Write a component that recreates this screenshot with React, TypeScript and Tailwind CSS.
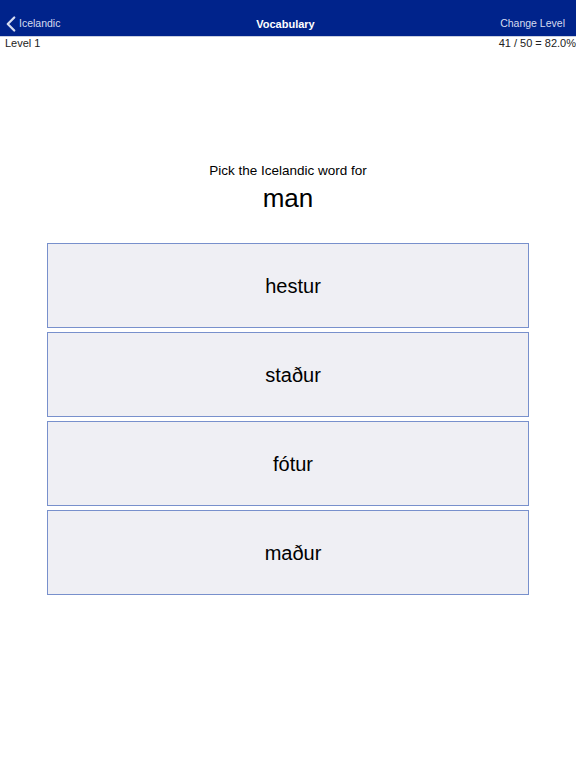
import { ChevronLeft } from 'lucide-react';

const choices = ['hestur', 'staður', 'fótur', 'maður'];

export default function App() {
  return (
    <div className="w-[576px] h-[768px] bg-white font-['Liberation_Sans',Arial,sans-serif] text-black">
      {/* Nav bar */}
      <div className="h-[37px] bg-[#00238b] border-b border-[#c9cfe0] flex items-end pb-[4px] px-[6px] text-white">
        <div className="flex-1 flex items-center text-[10.5px] text-[#d6dcf0]">
          <ChevronLeft className="w-[26px] h-[26px] -my-[8px] -ml-[8px]" strokeWidth={2.1} />
          <span className="-ml-[5px]">Icelandic</span>
        </div>
        <div className="flex-1 text-center text-[11px] font-bold">Vocabulary</div>
        <div className="flex-1 text-right text-[10.5px] text-[#d6dcf0] pr-[5px]">Change Level</div>
      </div>

      {/* Status row */}
      <div className="flex justify-between text-[11px] leading-[13px] text-[#222] pl-[5px]">
        <span>Level 1</span>
        <span>41 / 50 = 82.0%</span>
      </div>

      {/* Prompt */}
      <div className="mt-[112px] flex flex-col items-center">
        <div className="text-[13.5px] leading-[18px]">Pick the Icelandic word for</div>
        <div className="text-[26px] leading-[30px] mt-[3px]">man</div>
      </div>

      {/* Choices */}
      <div className="mt-[30px] mx-[47px] flex flex-col gap-[4px]">
        {choices.map((c) => (
          <button
            key={c}
            className="h-[85px] w-[482px] bg-[#efeff4] border border-[#7890cc] flex items-center justify-center pl-[10px] text-[20px]"
          >
            {c}
          </button>
        ))}
      </div>
    </div>
  );
}
